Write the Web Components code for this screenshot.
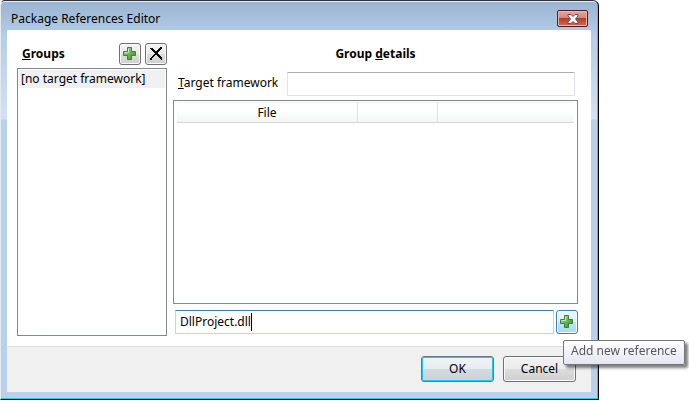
<!DOCTYPE html>
<html lang="en">
<head>
<meta charset="utf-8">
<title>Package References Editor</title>
<style>
  body {
    margin: 0;
    box-sizing: border-box;
    height: 100vh;
    padding: 0 90px 1px 0;
    background: #fff;
    color: #000;
    font: 12px/18px "Noto Sans", "Open Sans", sans-serif;
  }
</style>
</head>
<body>
<references-editor></references-editor>

<script>
const plusIcon = `
  <svg width="14" height="14" viewBox="0 0 14 14" aria-hidden="true">
    <defs>
      <linearGradient id="g" x1="0" y1="0" x2="1" y2="1">
        <stop offset="0" stop-color="#b5dca0"/>
        <stop offset=".5" stop-color="#6db556"/>
        <stop offset="1" stop-color="#2f8a25"/>
      </linearGradient>
    </defs>
    <path d="M4.5 .5h4v4h4v4h-4v4h-4v-4h-4v-4h4z" fill="url(#g)" stroke="#3f7f38"/>
    <path d="M5.500 5.500v-4M1.500 5.500h4" stroke="#c9e8b8" fill="none"/>
  </svg>`;

const deleteIcon = `
  <svg width="14" height="14" viewBox="0 0 14 14" shape-rendering="crispEdges" aria-hidden="true">
    <path d="M1 1h2l5 5 5 5v2h-1l-1-1-5-5-5-5z"/>
    <path d="M11 0h2v1l-5 5-5 6-1 1h-1v-2l5-5z"/>
  </svg>`;

class DialogWindow extends HTMLElement {
  constructor() {
    super();
    this.attachShadow({ mode: 'open' });
  }

  connectedCallback() {
    const title = this.getAttribute('heading') || '';

    this.shadowRoot.innerHTML = `
      <style>
        :host {
          box-sizing: border-box;
          display: flex;
          flex-direction: column;
          height: 100%;
          min-height: 300px;
          padding: 0 7px 7px 6px;
          border: 1px solid #000;
          border-top-color: #302f3a;
          border-left-color: #e4eaf1;
          border-radius: 5px 6px 0 0;
          background:
            linear-gradient(#99b4d1, #b5cde7 34px, #d3e2f3 118px, #b9d1ea 119px);
          box-shadow: inset -1px -1px #35c8dc, inset 0 1px #e3edf7;
        }
        header {
          display: flex;
          justify-content: space-between;
          align-items: flex-start;
          height: 29px;
          padding: 0 3px 0 4px;
          box-sizing: border-box;
        }
        h1 {
          margin: 0;
          padding-top: 9px;
          font: inherit;
        }
        button {
          display: grid;
          place-items: center;
          width: 31px;
          height: 17px;
          margin-top: 9px;
          padding: 0;
          border: 1px solid #571a28;
          border-radius: 2px;
          background: linear-gradient(#e8a79d, #d98576 47%, #b93c24 50%, #cf6b58);
          box-shadow: inset 0 0 0 1px #f0b5aa;
        }
        .client {
          flex: 1;
          min-height: 0;
          display: flex;
          flex-direction: column;
          background: #fff;
        }
        main {
          flex: 1;
          min-height: 0;
          display: grid;
          padding: 13px 13px 10px 10px;
        }
        footer {
          display: flex;
          justify-content: flex-end;
          gap: 9px;
          padding: 9px 15px 10px;
          border-top: 1px solid #dfdfdf;
          background: #f0f0f0;
        }
      </style>
      <header>
        <h1>${title}</h1>
        <button aria-label="Close">
          <svg width="12" height="10" viewBox="0 0 12 10" aria-hidden="true">
            <path d="M1 .5h3l2 2 2-2h3v1.500l-2.500 3 2.500 3v1.500h-3l-2-2-2 2h-3v-1.500l2.500-3-2.500-3z" fill="#f4f4f4" stroke="#535666"/>
          </svg>
        </button>
      </header>
      <div class="client">
        <main><slot></slot></main>
        <footer><slot name="actions"></slot></footer>
      </div>
    `;
  }
}

class IconButton extends HTMLElement {
  constructor() {
    super();
    this.attachShadow({ mode: 'open' });
  }

  connectedCallback() {
    const label = this.getAttribute('label') || '';
    const icon = this.getAttribute('icon') === 'delete' ? deleteIcon : plusIcon;

    this.shadowRoot.innerHTML = `
      <style>
        :host {
          display: flex;
          width: 22px;
          height: 22px;
        }
        :host([hot]) {
          height: 24px;
        }
        button {
          flex: 1;
          display: grid;
          place-items: center;
          padding: 0;
          border: 1px solid #707070;
          border-radius: 3px;
          background: linear-gradient(#f2f2f2, #ebebeb 50%, #dddddd 50%, #cfcfcf);
          box-shadow: inset 0 0 0 1px #fafafa;
        }
        :host([hot]) button {
          border-color: #3c7fb1;
          background: linear-gradient(#eaf6fd, #d9f0fc 50%, #bee6fd 50%, #a7d9f5);
        }
      </style>
      <button aria-label="${label}">${icon}</button>
    `;
  }
}

class CommandButton extends HTMLElement {
  constructor() {
    super();
    this.attachShadow({ mode: 'open' });
  }

  connectedCallback() {
    this.shadowRoot.innerHTML = `
      <style>
        :host {
          display: flex;
          width: 73px;
          height: 26px;
        }
        button {
          flex: 1;
          padding: 0;
          border: 1px solid #707070;
          border-radius: 3px;
          background: linear-gradient(#f2f2f2, #ebebeb 50%, #dddddd 50%, #cfcfcf);
          box-shadow: inset 0 0 0 1px #fafafa;
          color: inherit;
          font: inherit;
        }
        :host([default]) button {
          border-color: #5c7c8c;
          background: linear-gradient(#f0f4f6, #e6ecef 50%, #d3dbdf 50%, #cad3d8);
          box-shadow: inset 0 0 0 1px #1fc8f8;
        }
      </style>
      <button><slot></slot></button>
    `;
  }
}

class GroupList extends HTMLElement {
  constructor() {
    super();
    this.attachShadow({ mode: 'open' });
  }

  connectedCallback() {
    const groups = (this.getAttribute('groups') || '').split(',');

    this.shadowRoot.innerHTML = `
      <style>
        :host {
          display: flex;
          flex-direction: column;
          gap: 3px;
          min-height: 0;
        }
        .bar {
          display: flex;
          align-items: center;
          gap: 4px;
        }
        label {
          flex: 1;
          padding-left: 5px;
          font-weight: bold;
        }
        select {
          flex: 1;
          min-height: 0;
          width: 100%;
          padding: 1px;
          border: 1px solid #828790;
          border-radius: 0;
          background: #fff;
          color: inherit;
          font: inherit;
          outline: none;
          overflow: hidden;
        }
        option {
          padding: 0 2px;
          min-height: 18px;
          background: #f0f0f0;
        }
      </style>
      <div class="bar">
        <label for="groups"><u>G</u>roups</label>
        <slot></slot>
      </div>
      <select id="groups" size="2">
        ${groups.map(g => `<option>${g}</option>`).join('')}
      </select>
    `;
  }
}

class TextField extends HTMLElement {
  constructor() {
    super();
    this.attachShadow({ mode: 'open', delegatesFocus: true });
  }

  connectedCallback() {
    const value = this.getAttribute('value') || '';
    const hint = this.getAttribute('hint') || '';

    this.shadowRoot.innerHTML = `
      <style>
        :host {
          display: flex;
          min-width: 0;
        }
        label {
          min-width: 109px;
          padding-top: 2px;
        }
        .box {
          flex: 1;
          min-width: 0;
          box-sizing: border-box;
          display: flex;
          align-items: center;
          height: 24px;
          padding: 0 4px;
          border: 1px solid #e2e3ea;
          border-top-color: #abadb3;
          border-radius: 1px;
          background: #fff;
        }
        input {
          field-sizing: content;
          min-width: 1px;
          max-width: 100%;
          padding: 0;
          border: 0;
          background: none;
          color: inherit;
          font: inherit;
          outline: none;
          caret-color: transparent;
        }
        .box:focus-within {
          border-color: #b7d9ed;
          border-top-color: #3d7bad;
        }
        .box:focus-within::after {
          content: "";
          width: 1px;
          height: 18px;
          background: #000;
        }
      </style>
      ${hint ? '' : '<label for="field"><slot></slot></label>'}
      <div class="box">
        <input id="field" type="text" value="${value}" ${hint ? `aria-label="${hint}"` : ''}>
      </div>
    `;

    if (this.hasAttribute('focused')) {
      const input = this.shadowRoot.querySelector('input');
      input.focus();
      input.setSelectionRange(value.length, value.length);
    }
  }
}

class FileTable extends HTMLElement {
  constructor() {
    super();
    this.attachShadow({ mode: 'open' });
  }

  connectedCallback() {
    this.shadowRoot.innerHTML = `
      <style>
        :host {
          display: block;
          min-height: 0;
          padding: 1px 3px;
          border: 1px solid #828790;
          background: #fff;
        }
        table {
          width: 100%;
          table-layout: fixed;
          border-collapse: separate;
          border-spacing: 0;
        }
        .file {
          width: 181px;
        }
        .action {
          width: 80px;
        }
        th {
          height: 19px;
          padding: 0;
          border-top: 1px solid #f2f2f2;
          border-bottom: 1px solid #d5d5d5;
          border-right: 1px solid #dedfe1;
          background: linear-gradient(#fff 40%, #f4f5f6);
          font-weight: normal;
          line-height: 18px;
        }
        th:last-child {
          border-right: 0;
        }
      </style>
      <table aria-label="References">
        <colgroup><col class="file"><col class="action"><col></colgroup>
        <thead>
          <tr><th scope="col">File</th><th></th><th></th></tr>
        </thead>
        <tbody></tbody>
      </table>
    `;
  }
}

class ToolTip extends HTMLElement {
  constructor() {
    super();
    this.attachShadow({ mode: 'open' });
  }

  connectedCallback() {
    this.shadowRoot.innerHTML = `
      <style>
        :host {
          position: absolute;
          top: 30px;
          left: 7px;
          z-index: 1;
          padding: 1px 7px 4px;
          border: 1px solid #767676;
          border-radius: 2px;
          background: linear-gradient(#fff, #e4e5f0);
          box-shadow: 3px 3px 3px rgba(0, 0, 0, .5);
          color: #575757;
          white-space: nowrap;
        }
      </style>
      <slot></slot>
    `;
  }
}

class ReferencesEditor extends HTMLElement {
  constructor() {
    super();
    this.attachShadow({ mode: 'open' });
  }

  connectedCallback() {
    this.shadowRoot.innerHTML = `
      <style>
        :host {
          display: block;
          height: 100%;
        }
        .panes {
          display: grid;
          grid-template-columns: 150px 1fr;
          gap: 6px;
          min-height: 0;
        }
        .details {
          display: flex;
          flex-direction: column;
          min-height: 0;
        }
        h2 {
          margin: 0;
          padding: 2px 0 9px;
          text-align: center;
          font-size: 12px;
          line-height: 18px;
        }
        .target {
          padding: 0 3px 4px 5px;
        }
        file-table {
          flex: 1;
        }
        .add {
          display: flex;
          gap: 2px;
          padding: 6px 0 2px 2px;
        }
        .add text-field {
          flex: 1;
        }
        .anchor {
          position: relative;
        }
      </style>
      <dialog-window heading="Package References Editor">
        <div class="panes">
          <group-list groups="[no target framework]">
            <icon-button icon="plus" label="Add group"></icon-button>
            <icon-button icon="delete" label="Remove group"></icon-button>
          </group-list>
          <section class="details">
            <h2>Group <u>d</u>etails</h2>
            <text-field class="target"><u>T</u>arget framework</text-field>
            <file-table></file-table>
            <div class="add">
              <text-field value="DllProject.dll" hint="New reference" focused></text-field>
              <div class="anchor">
                <icon-button icon="plus" label="Add new reference" hot></icon-button>
                <tool-tip role="tooltip">Add new reference</tool-tip>
              </div>
            </div>
          </section>
        </div>
        <command-button slot="actions" default>OK</command-button>
        <command-button slot="actions">Cancel</command-button>
      </dialog-window>
    `;
  }
}

customElements.define('dialog-window', DialogWindow);
customElements.define('icon-button', IconButton);
customElements.define('command-button', CommandButton);
customElements.define('group-list', GroupList);
customElements.define('text-field', TextField);
customElements.define('file-table', FileTable);
customElements.define('tool-tip', ToolTip);
customElements.define('references-editor', ReferencesEditor);
</script>
</body>
</html>
